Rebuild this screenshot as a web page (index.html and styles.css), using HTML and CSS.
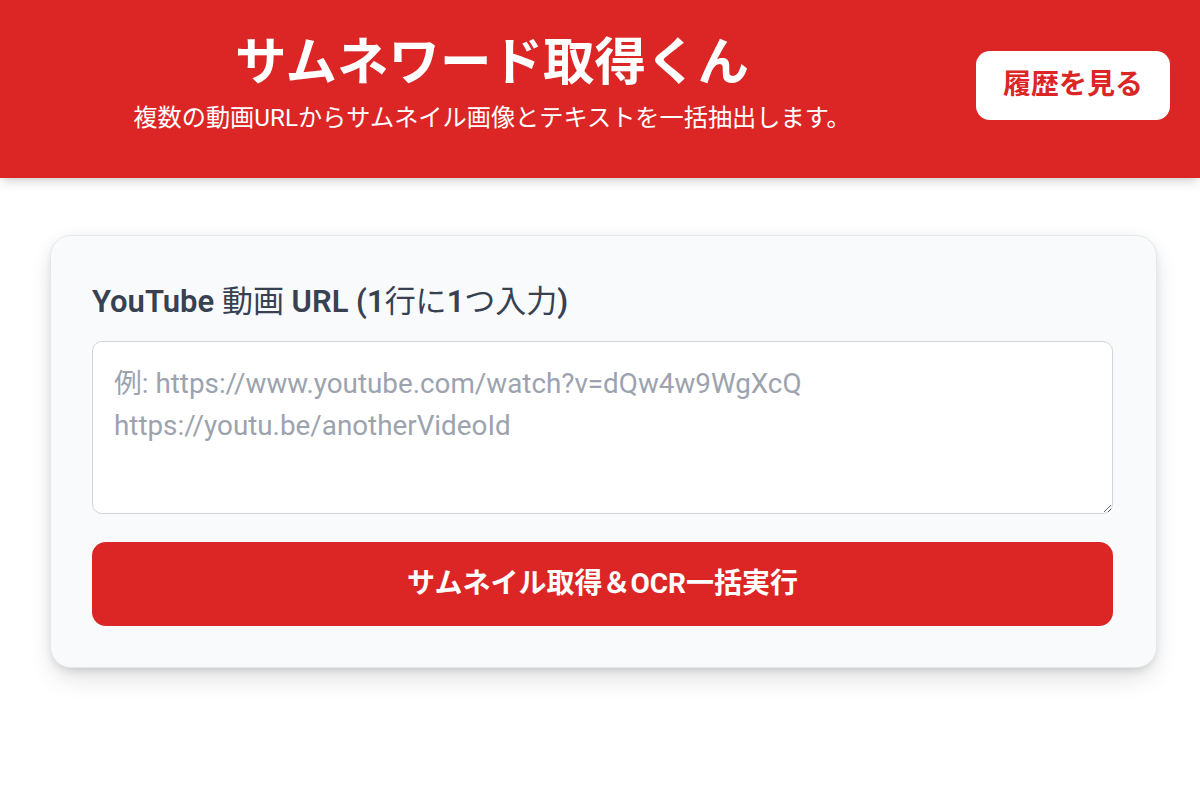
FILE: index.html
```html
<!DOCTYPE html>
<html lang="ja">
<head>
<meta charset="utf-8">
<title>サムネワード取得くん</title>
<link rel="stylesheet" href="styles.css">
</head>
<body>
<header class="header">
  <div class="header-text">
    <h1 class="title">サムネワード取得くん</h1>
    <p class="subtitle">複数の動画URLからサムネイル画像とテキストを一括抽出します。</p>
  </div>
  <button class="history-btn" type="button">履歴を見る</button>
</header>
<main class="main">
  <section class="card">
    <label class="label" for="urls">YouTube <span class="jp">動画</span> URL (1<span class="jp">行に</span>1<span class="jp">つ入力</span>)</label>
    <textarea id="urls" class="urls" rows="3" placeholder="例: https://www.youtube.com/watch?v=dQw4w9WgXcQ
https://youtu.be/anotherVideoId"></textarea>
    <button class="run-btn" type="button">サムネイル取得＆OCR一括実行</button>
  </section>
</main>
</body>
</html>
```
FILE: styles.css
```css
* { box-sizing: border-box; }
html, body { margin: 0; padding: 0; }
body {
  font-family: Roboto, "Noto Sans CJK JP", sans-serif;
  background: #ffffff;
  color: #1f2937;
  min-height: 797px;
}
.header {
  background: #dc2626;
  color: #ffffff;
  display: flex;
  align-items: center;
  gap: 28px;
  padding: 31px 30px 42px 36px;
  height: 178px;
  box-shadow: 0 7px 10px -2px rgba(0,0,0,0.12), 0 3px 6px -3px rgba(0,0,0,0.1);
  position: relative;
  z-index: 1;
}
.header-text {
  flex: 1;
  text-align: center;
}
.title {
  margin: 0;
  font-size: 51.5px;
  line-height: 63px;
  font-weight: 700;
}
.subtitle {
  margin: 7px 0 0;
  font-size: 24.2px;
  line-height: 35px;
}
.history-btn {
  font-family: inherit;
  background: #ffffff;
  color: #dc2626;
  border: none;
  border-radius: 14px;
  font-size: 28px;
  line-height: 42px;
  font-weight: 700;
  padding: 13px 27px 14px;
  margin-top: 4px;
  cursor: pointer;
}
.main {
  padding-top: 57px;
  padding-bottom: 60px;
}
.card {
  margin-left: 50px;
  width: 1107px;
  background: #f9fafb;
  border: 1px solid #e5e7eb;
  border-radius: 21px;
  padding: 41px 43px 41px 41px;
  display: flex;
  flex-direction: column;
  box-shadow: 0 12px 26px -4px rgba(0,0,0,0.14), 0 5px 10px -4px rgba(0,0,0,0.12), 0 0 14px rgba(0,0,0,0.04);
}
.label {
  font-size: 31px;
  line-height: 49px;
  font-weight: 600;
  color: #374151;
  margin-bottom: 15px;
}
.label .jp {
  font-weight: 400;
}
.urls {
  font-family: inherit;
  font-size: 27.8px;
  line-height: 42px;
  height: 173px;
  padding: 21px 21px;
  border: 1px solid #d1d5db;
  border-radius: 10px;
  background: #ffffff;
  color: #1f2937;
  resize: vertical;
}
.urls::placeholder { color: #9ca3af; }
.run-btn {
  margin-top: 28px;
  font-family: inherit;
  background: #dc2626;
  color: #ffffff;
  border: none;
  border-radius: 14px;
  font-size: 28px;
  line-height: 42px;
  font-weight: 700;
  padding: 21px;
  cursor: pointer;
}
```
